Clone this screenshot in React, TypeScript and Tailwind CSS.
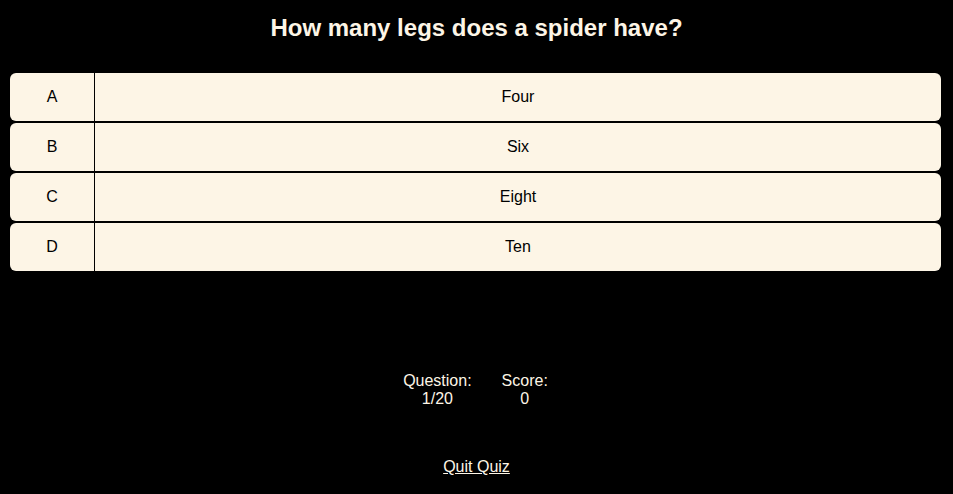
const OPTIONS = [
  { key: 'A', text: 'Four' },
  { key: 'B', text: 'Six' },
  { key: 'C', text: 'Eight' },
  { key: 'D', text: 'Ten' },
];

export default function App() {
  return (
    <div className="min-h-[494px] bg-black font-['Liberation_Sans',Arial,sans-serif] text-[#fdf5e6]">
      <h1 className="pt-[13px] text-center text-[24px] font-bold leading-[30px]">
        How many legs does a spider have?
      </h1>

      <div className="ml-[10px] mr-[12px] mt-[30px] flex flex-col gap-[2px]">
        {OPTIONS.map((o) => (
          <button
            key={o.key}
            className="flex h-[48px] items-stretch rounded-[6px] bg-[#fdf5e6] text-[16px] text-black"
          >
            <span className="flex w-[85px] items-center justify-center border-r border-black">{o.key}</span>
            <span className="flex flex-1 items-center justify-center">{o.text}</span>
          </button>
        ))}
      </div>

      <div className="mt-[101px] flex justify-center gap-[30px] pr-[2px] text-[16px] leading-[18px]">
        <div className="text-center">
          <div>Question:</div>
          <div>1/20</div>
        </div>
        <div className="text-center">
          <div>Score:</div>
          <div>0</div>
        </div>
      </div>

      <div className="mt-[47px] text-center text-[16px]">
        <a href="#" className="underline">Quit Quiz</a>
      </div>
    </div>
  );
}
